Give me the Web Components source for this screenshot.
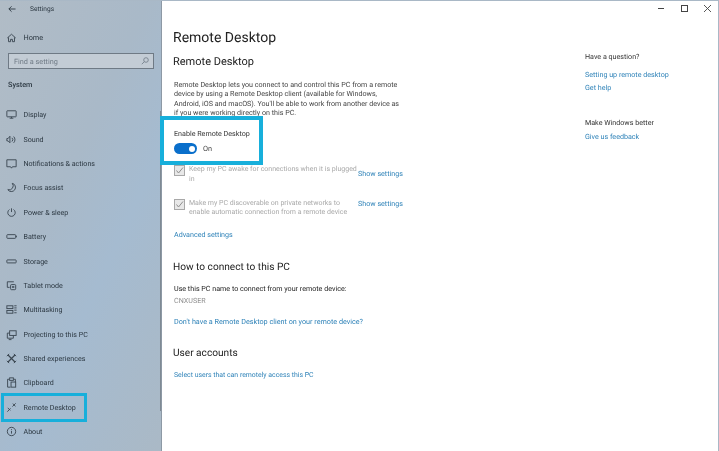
<!DOCTYPE html>
<html>
<head>
<meta charset="utf-8">
<title>Settings</title>
<style>
  html, body { margin: 0; padding: 0; background: #fff; }
  body { font-family: Roboto, "Open Sans", sans-serif; overflow: hidden; text-rendering: geometricPrecision; }
</style>
</head>
<body>
<settings-window>
  <settings-sidebar slot="side">
    <nav-item icon="display">Display</nav-item>
    <nav-item icon="sound">Sound</nav-item>
    <nav-item icon="notify">Notifications &amp; actions</nav-item>
    <nav-item icon="focus">Focus assist</nav-item>
    <nav-item icon="power">Power &amp; sleep</nav-item>
    <nav-item icon="battery">Battery</nav-item>
    <nav-item icon="storage">Storage</nav-item>
    <nav-item icon="tablet">Tablet mode</nav-item>
    <nav-item icon="multi">Multitasking</nav-item>
    <nav-item icon="project">Projecting to this PC</nav-item>
    <nav-item icon="shared">Shared experiences</nav-item>
    <nav-item icon="clipboard">Clipboard</nav-item>
    <nav-item icon="remote" marked>Remote Desktop</nav-item>
    <nav-item icon="about">About</nav-item>
  </settings-sidebar>
  <remote-page slot="main"></remote-page>
  <help-aside slot="aside"></help-aside>
</settings-window>

<script>
const ICONS = {
  home: '<path d="M2.500 7.500 7 3.500l4.500 4M3.800 6.800v4.700H6V9h2v2.500h2.200V6.800"/>',
  display: '<rect x="2" y="3" width="10" height="6.500" rx=".5"/><path d="M5 11h4M7 9.500V11"/>',
  sound: '<path d="M2 6v2.500h1.300L5.300 10.500v-7L3.300 6zM7.500 5.200a2.800 2.800 0 0 1 0 4M9.300 3.800a4.800 4.800 0 0 1 0 6.800"/>',
  notify: '<path d="M2 3h10v7.500H8L7 12l-1-1.500H2z"/>',
  focus: '<path d="M7.800 2.500A4.500 4.500 0 1 1 3 9.300 4.300 4.300 0 0 0 7.800 2.500z"/>',
  power: '<path d="M7 2.500v4M4.800 3.800a4 4 0 1 0 4.400 0"/>',
  battery: '<rect x="2" y="5" width="9.500" height="4" rx=".8"/><path d="M12.300 6.200v1.600"/>',
  storage: '<rect x="2" y="5.300" width="10" height="3.200" rx=".6"/>',
  tablet: '<path d="M9.500 3H2.500v6H5"/><rect x="6" y="6" width="5.500" height="5.500" rx="1"/><rect x="7.500" y="7.800" width="2.500" height="1.600" fill="#3b4752" stroke="none"/>',
  multi: '<rect x="2" y="3" width="6.500" height="3"/><rect x="2" y="8" width="6.500" height="3"/><path d="M10 3h2.500M10 5.300h2.500M10 7.700h2.500M10 10.500h2.500"/>',
  project: '<rect x="5" y="3" width="7" height="5"/><path d="M5 5.500H2.500v5.500h6.500V8M4 12.500h3"/>',
  shared: '<path d="M3 3l8 8M11 3l-8 8" stroke-width="1.300"/><path d="M2 4.500 4.500 2M9.500 2 12 4.500M2 9.500 4.500 12M9.500 12 12 9.500" stroke-width="1"/>',
  clipboard: '<path d="M4.500 3.500H2.800V12h3M9.500 3.500h1.700V6.500"/><rect x="5" y="2" width="4" height="2.700"/><rect x="6.500" y="6.500" width="5" height="5.500"/>',
  remote: '<path d="M2.500 11.500 6 8M3 7.500 5.800 10M8 6l3.500-3.500M8.500 2.800l2.700 3"/>',
  about: '<circle cx="7" cy="7" r="4.500"/><path d="M7 6.300v3M7 4.500v.9"/>'
};

function icon(name, size) {
  return `<svg viewBox="0 0 14 14" width="${size}" height="${size}" fill="none" stroke="#3b4752" stroke-width="1">${ICONS[name]}</svg>`;
}

class SettingsWindow extends HTMLElement {
  constructor() {
    super();
    this.attachShadow({ mode: "open" });
    this.shadowRoot.innerHTML = `
    <style>
      :host { display: grid; grid-template-columns: 162px 1fr 133px; width: 719px; height: 451px; box-sizing: border-box; position: relative; border-top: 1px solid #a9b8c6; border-right: 1px solid #a9b8c6; overflow: hidden; background: #fff; filter: blur(.3px); }
      .caption { position: absolute; top: 2.500px; right: 6px; display: flex; gap: 14px; align-items: center; color: #444; }
      .caption svg { display: block; }
    </style>
    <slot name="side"></slot>
    <slot name="main"></slot>
    <slot name="aside"></slot>
    <div class="caption">
      <svg width="9" height="9" viewBox="0 0 9 9" fill="none" stroke="currentColor"><path d="M1 4.500h6"/></svg>
      <svg width="9" height="9" viewBox="0 0 9 9" fill="none" stroke="currentColor"><rect x="1.500" y="1.500" width="6" height="6"/></svg>
      <svg width="9" height="9" viewBox="0 0 9 9" fill="none" stroke="currentColor" stroke-width=".9"><path d="M1 1l7 7M8 1 1 8"/></svg>
    </div>`;
  }
}

class SettingsSidebar extends HTMLElement {
  constructor() {
    super();
    this.attachShadow({ mode: "open" });
    this.shadowRoot.innerHTML = `
    <style>
      :host { display: flex; flex-direction: column; box-sizing: border-box; height: 450px; position: relative; color: #2b3741; font-size: 7.100px; background: linear-gradient(115deg, #b1bcc6 0%, #a9b9c8 40%, #a5bbd0 62%, #aab9c6 100%); border-right: 1px solid #8d99a5; }
      :host > * { flex: none; }
      .title { display: flex; align-items: center; height: 15px; padding-left: 8px; gap: 14px; font-size: 6.600px; }
      .title svg { width: 8px; height: 8px; }
      .home { display: flex; align-items: center; gap: 5.500px; margin-top: 13px; padding-left: 5px; height: 16px; font-size: 7.300px; }
      .home svg { display: block; }
      .search { display: flex; align-items: center; justify-content: space-between; box-sizing: border-box; width: 146px; height: 16px; margin: 8px 0 0 8px; padding: 0 4px 0 5px; border: 1px solid #6f7a85; background: #c3ccd5; color: #6f7a85; font-size: 7.300px; }
      .system { font-weight: 500; margin: 9px 0 0 8px; height: 14px; line-height: 14px; font-size: 7.300px; }
      .list { display: grid; grid-auto-rows: 24.400px; margin-top: 10.500px; }
      .thumb { position: absolute; right: 0; top: 110px; width: 1px; height: 300px; background: #7f8a94; }
    </style>
    <div class="title">
      <svg viewBox="0 0 9 9" fill="none" stroke="currentColor"><path d="M8.500 4.500H1M4 1.500l-3 3 3 3"/></svg>
      <span>Settings</span>
    </div>
    <div class="home">${icon("home", 13)}<span>Home</span></div>
    <div class="search"><span>Find a setting</span>
      <svg width="8" height="8" viewBox="0 0 8 8" fill="none" stroke="#6f7a85" stroke-width=".8"><circle cx="5" cy="3" r="2.300"/><path d="M3.300 4.700.8 7.200"/></svg>
    </div>
    <div class="system">System</div>
    <div class="list"><slot></slot></div>
    <div class="thumb"></div>`;
  }
}

class NavItem extends HTMLElement {
  constructor() {
    super();
    this.attachShadow({ mode: "open" });
  }
  connectedCallback() {
    const marked = this.hasAttribute("marked");
    this.shadowRoot.innerHTML = `
    <style>
      :host { display: flex; align-items: center; position: relative; padding-left: 5px; gap: 5.500px; height: 24.400px; font-size: 7.100px; }
      svg { display: block; flex: none; }
      .mark { position: absolute; left: 1px; top: -2px; width: 86px; height: 29px; box-sizing: border-box; border: 3.500px solid #17afdb; }
    </style>
    ${icon(this.getAttribute("icon"), 13)}
    <span><slot></slot></span>
    ${marked ? '<div class="mark"></div>' : ''}`;
  }
}

class ToggleSwitch extends HTMLElement {
  constructor() {
    super();
    this.attachShadow({ mode: "open" });
    this.shadowRoot.innerHTML = `
    <style>
      :host { display: flex; align-items: center; gap: 6px; font-size: 7.300px; color: #444; }
      .track { display: flex; justify-content: flex-end; align-items: center; box-sizing: border-box; width: 23px; height: 11px; padding-right: 2.500px; border-radius: 6px; background: #0a6fcb; }
      .knob { width: 6px; height: 6px; border-radius: 50%; background: #fff; }
    </style>
    <div class="track"><div class="knob"></div></div>
    <slot></slot>`;
  }
}

class CheckRow extends HTMLElement {
  constructor() {
    super();
    this.attachShadow({ mode: "open" });
    this.shadowRoot.innerHTML = `
    <style>
      :host { display: grid; grid-template-columns: 11px 169px auto; column-gap: 4px; font-size: 7px; line-height: 9.600px; color: #a9a9a9; }
      .box { box-sizing: border-box; width: 11px; height: 11px; border: 1px solid #a8a8a8; background: #e8e8e8; }
      .box svg { display: block; }
      .link { color: #2e82b8; margin-left: -4px; font-size: 7.150px; }
    </style>
    <div class="box"><svg width="9" height="9" viewBox="0 0 9 9" fill="none" stroke="#8f8f8f"><path d="M1.500 4.500 3.500 7 8 1.500"/></svg></div>
    <div><slot></slot></div>
    <div class="link"><slot name="link"></slot></div>`;
  }
}

class RemotePage extends HTMLElement {
  constructor() {
    super();
    this.attachShadow({ mode: "open" });
    this.shadowRoot.innerHTML = `
    <style>
      :host { display: block; position: relative; padding: 27px 0 0 12px; color: #222; font-size: 7.150px; line-height: 9.600px; }
      h1 { margin: 0 0 0 -1px; font-weight: 400; font-size: 14px; line-height: 20px; color: #222; }
      h2 { margin: 0 0 0 -1px; font-weight: 400; font-size: 10.150px; line-height: 14px; color: #222; }
      p { margin: 0; }
      a { color: #2e82b8; text-decoration: none; display: block; }
      .intro { width: 228px; margin-top: 11.300px; color: #444; line-height: 9.400px; }
      .enable { margin-top: 11.300px; color: #333; }
      toggle-switch { margin-top: 4.800px; }
      .checks { display: grid; row-gap: 14.300px; margin-top: 11.200px; width: 240px; }
      .adv { margin-top: 11.700px; }
      .name { color: #8e8e8e; margin-top: 2.400px; }
      .mark { position: absolute; left: -2px; top: 115px; width: 103px; height: 49px; box-sizing: border-box; border: 4px solid #17afdb; }
    </style>
    <h1>Remote Desktop</h1>
    <h2 style="margin-top:6.500px;font-size:11px">Remote Desktop</h2>
    <p class="intro">Remote Desktop lets you connect to and control this PC from a remote device by using a Remote Desktop client (available for Windows, Android, iOS and macOS). You'll be able to work from another device as if you were working directly on this PC.</p>
    <p class="enable">Enable Remote Desktop</p>
    <toggle-switch>On</toggle-switch>
    <div class="checks">
      <check-row>Keep my PC awake for connections when it is plugged in<span slot="link" style="display:block;margin-top:4px">Show settings</span></check-row>
      <check-row>Make my PC discoverable on private networks to enable automatic connection from a remote device<span slot="link">Show settings</span></check-row>
    </div>
    <a class="adv">Advanced settings</a>
    <h2 style="margin-top:21.800px">How to connect to this PC</h2>
    <p style="margin-top:8.500px">Use this PC name to connect from your remote device:</p>
    <p class="name">CNXUSER</p>
    <a style="margin-top:11.700px;font-size:7.220px">Don't have a Remote Desktop client on your remote device?</a>
    <h2 style="margin-top:20.600px">User accounts</h2>
    <a style="margin-top:9.600px;font-size:6.900px">Select users that can remotely access this PC</a>
    <div class="mark"></div>`;
  }
}

class HelpAside extends HTMLElement {
  constructor() {
    super();
    this.attachShadow({ mode: "open" });
    this.shadowRoot.innerHTML = `
    <style>
      :host { display: block; padding: 51px 0 0 0; font-size: 7.150px; line-height: 10px; color: #333; }
      a { display: block; color: #2e82b8; }
    </style>
    <div>Have a question?</div>
    <a style="margin-top:7.500px">Setting up remote desktop</a>
    <a style="margin-top:3.500px">Get help</a>
    <div style="margin-top:25px">Make Windows better</div>
    <a style="margin-top:4px">Give us feedback</a>`;
  }
}

customElements.define("settings-window", SettingsWindow);
customElements.define("settings-sidebar", SettingsSidebar);
customElements.define("nav-item", NavItem);
customElements.define("toggle-switch", ToggleSwitch);
customElements.define("check-row", CheckRow);
customElements.define("remote-page", RemotePage);
customElements.define("help-aside", HelpAside);
</script>
</body>
</html>
